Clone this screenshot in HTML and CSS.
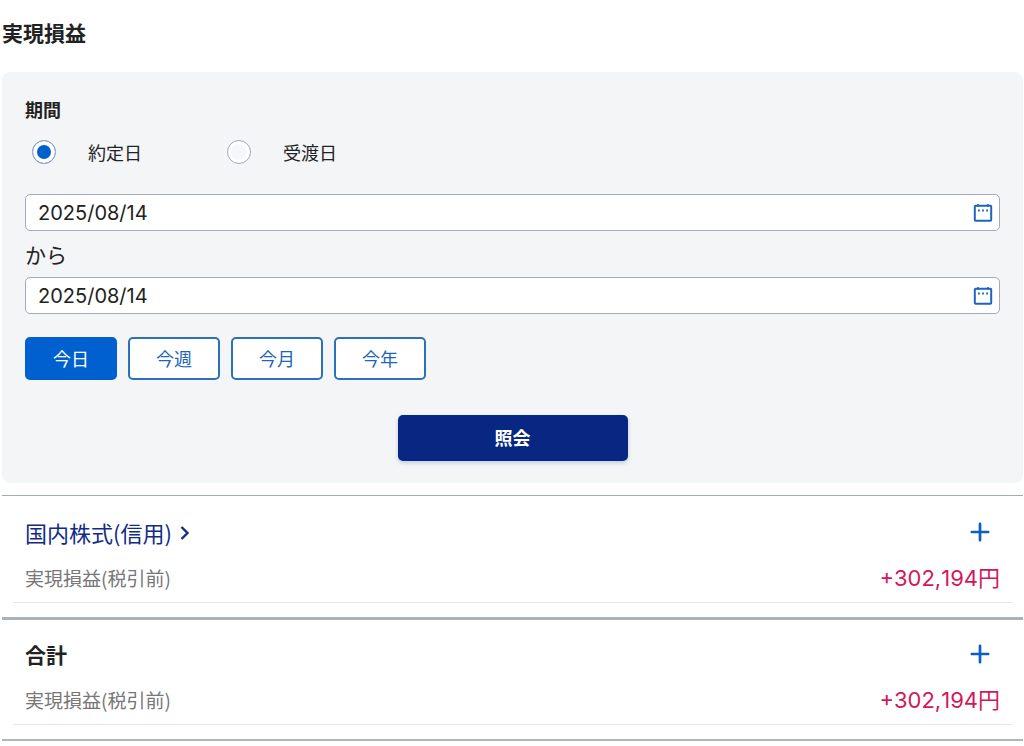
FILE: index.html
```html
<!DOCTYPE html>
<html lang="ja">
<head>
<meta charset="utf-8">
<title>実現損益</title>
<link rel="stylesheet" href="styles.css">
</head>
<body>
<main class="page">
  <h1 class="page-title">実現損益</h1>
  <form class="panel">
    <fieldset class="period">
      <legend class="period-title">期間</legend>
      <div class="radios">
        <label class="radio"><input type="radio" name="basis" checked><span>約定日</span></label>
        <label class="radio"><input type="radio" name="basis"><span>受渡日</span></label>
      </div>
    </fieldset>
    <div class="date-field">
      <input class="date-input" type="text" value="2025/08/14" aria-label="開始日">
      <button class="icon-button" type="button" aria-label="開始日を選択">
        <svg width="20" height="20" viewBox="0 0 20 20" fill="none" stroke="#1d66bd" stroke-width="2"><rect x="1.8" y="2.800" width="16.400" height="15" rx="0.8"/><path d="M5 1.200v2.500M15 1.200v2.500"/><path d="M5 7.500h1.800M9.100 7.500h1.800M13.200 7.500h1.800" stroke-width="1.800"/></svg>
      </button>
    </div>
    <p class="between">から</p>
    <div class="date-field">
      <input class="date-input" type="text" value="2025/08/14" aria-label="終了日">
      <button class="icon-button" type="button" aria-label="終了日を選択">
        <svg width="20" height="20" viewBox="0 0 20 20" fill="none" stroke="#1d66bd" stroke-width="2"><rect x="1.8" y="2.800" width="16.400" height="15" rx="0.8"/><path d="M5 1.200v2.500M15 1.200v2.500"/><path d="M5 7.500h1.800M9.100 7.500h1.800M13.200 7.500h1.800" stroke-width="1.800"/></svg>
      </button>
    </div>
    <div class="presets">
      <button class="preset preset-active" type="button">今日</button>
      <button class="preset" type="button">今週</button>
      <button class="preset" type="button">今月</button>
      <button class="preset" type="button">今年</button>
    </div>
    <button class="submit" type="button">照会</button>
  </form>
  <div class="results">
    <section class="result">
      <div class="result-head">
        <h2 class="result-title"><a class="result-link" href="#stocks">国内株式(信用)<svg width="10" height="18" viewBox="0 0 10 18" fill="none" stroke="currentColor" stroke-width="2.400"><path d="M1.500 4L7.500 10L1.500 16"/></svg></a></h2>
        <button class="icon-button" type="button" aria-label="国内株式(信用)を開く">
          <svg width="20" height="20" viewBox="0 0 20 20" fill="none" stroke="#0b5fc4" stroke-width="2.700" stroke-linecap="round"><path d="M10 1.800v16.400M1.800 10h16.400"/></svg>
        </button>
      </div>
      <div class="result-row"><span class="result-label">実現損益(税引前)</span><span class="amount">+302,194円</span></div>
    </section>
    <section class="result result-total">
      <div class="result-head">
        <h2 class="result-title result-title-strong">合計</h2>
        <button class="icon-button" type="button" aria-label="合計を開く">
          <svg width="20" height="20" viewBox="0 0 20 20" fill="none" stroke="#0b5fc4" stroke-width="2.700" stroke-linecap="round"><path d="M10 1.800v16.400M1.800 10h16.400"/></svg>
        </button>
      </div>
      <div class="result-row"><span class="result-label">実現損益(税引前)</span><span class="amount">+302,194円</span></div>
    </section>
  </div>
</main>
</body>
</html>
```
FILE: styles.css
```css
* { box-sizing: border-box; }
body {
  margin: 0;
  background: #fff;
  color: #222;
  font-family: "Noto Sans CJK JP", sans-serif;
  font-size: 18px;
  line-height: 28px;
}
button, input { font: inherit; }
.page { padding: 17px 1px 6px 2px; }
.page-title { margin: 0 0 25px; font-size: 21px; line-height: 30px; font-weight: 700; }
.panel {
  display: flex;
  flex-direction: column;
  padding: 23px 23px 22px;
  border-radius: 8px;
  background: #f3f5f7;
}
.period { min-width: 0; margin: 0; padding: 0; border: 0; }
.period-title { padding: 0; font-weight: 700; }
.radios { display: flex; padding: 15px 0 28px 7px; }
.radio { display: flex; align-items: center; gap: 32px; width: 195px; }
.radio input {
  appearance: none;
  width: 24px;
  height: 24px;
  margin: 0;
  border: 1px solid #a3a8b8;
  border-radius: 50%;
  background: #f6f7fb;
  box-shadow: inset 0 0 0 3px #fff;
}
.radio input:checked { background: #0060cc; box-shadow: inset 0 0 0 4px #fff; }
.date-field {
  display: flex;
  align-items: center;
  height: 37px;
  padding: 0 6px 0 12px;
  border: 1px solid #a3aabd;
  border-radius: 5px;
  background: #fff;
}
.date-input {
  flex: 1;
  min-width: 0;
  padding: 0;
  border: 0;
  outline: 0;
  background: none;
  color: #222;
  font-family: Inter, sans-serif;
  font-size: 20px;
}
.icon-button {
  display: flex;
  margin: 0;
  padding: 0;
  border: 0;
  background: none;
}
.between { margin: 9px 0; font-size: 21px; }
.presets { display: flex; gap: 11px; margin: 23px 0 35px; }
.preset {
  width: 92px;
  height: 43px;
  padding: 0 0 2px;
  border: 2px solid #2a70bd;
  border-radius: 5px;
  background: #fff;
  color: #1d66b9;
}
.preset-active { border-color: #0060cf; background: #0060cf; color: #fff; }
.submit {
  align-self: center;
  width: 230px;
  height: 46px;
  padding: 0 0 2px;
  border: 0;
  border-radius: 5px;
  background: #072783;
  box-shadow: 0 2px 4px #07278333;
  color: #fff;
  font-weight: 700;
}
.results { margin-top: 12px; border-bottom: 2px solid #b0b5c3; }
.result { padding: 21px 11px 14px; border-top: 1px solid #a3aabd; }
.result-total { padding-top: 19px; border-top: 3px solid #abb0c1; }
.result-head { display: flex; align-items: center; justify-content: space-between; padding: 0 22px 0 12px; }
.result-title { margin: 0; font-size: 22px; line-height: 30px; font-weight: 400; }
.result-title-strong { font-size: 21px; font-weight: 700; }
.result-link { display: flex; align-items: center; gap: 8px; color: #112b87; text-decoration: none; }
.result-row {
  display: flex;
  align-items: center;
  justify-content: space-between;
  margin-top: 17px;
  padding: 0 12px 10px;
  border-bottom: 1px solid #e5e7ec;
}
.result-label { color: #777; font-size: 19px; }
.amount { color: #d3175b; font-family: Inter, "Noto Sans CJK JP", sans-serif; font-size: 22px; font-kerning: none; }
```
